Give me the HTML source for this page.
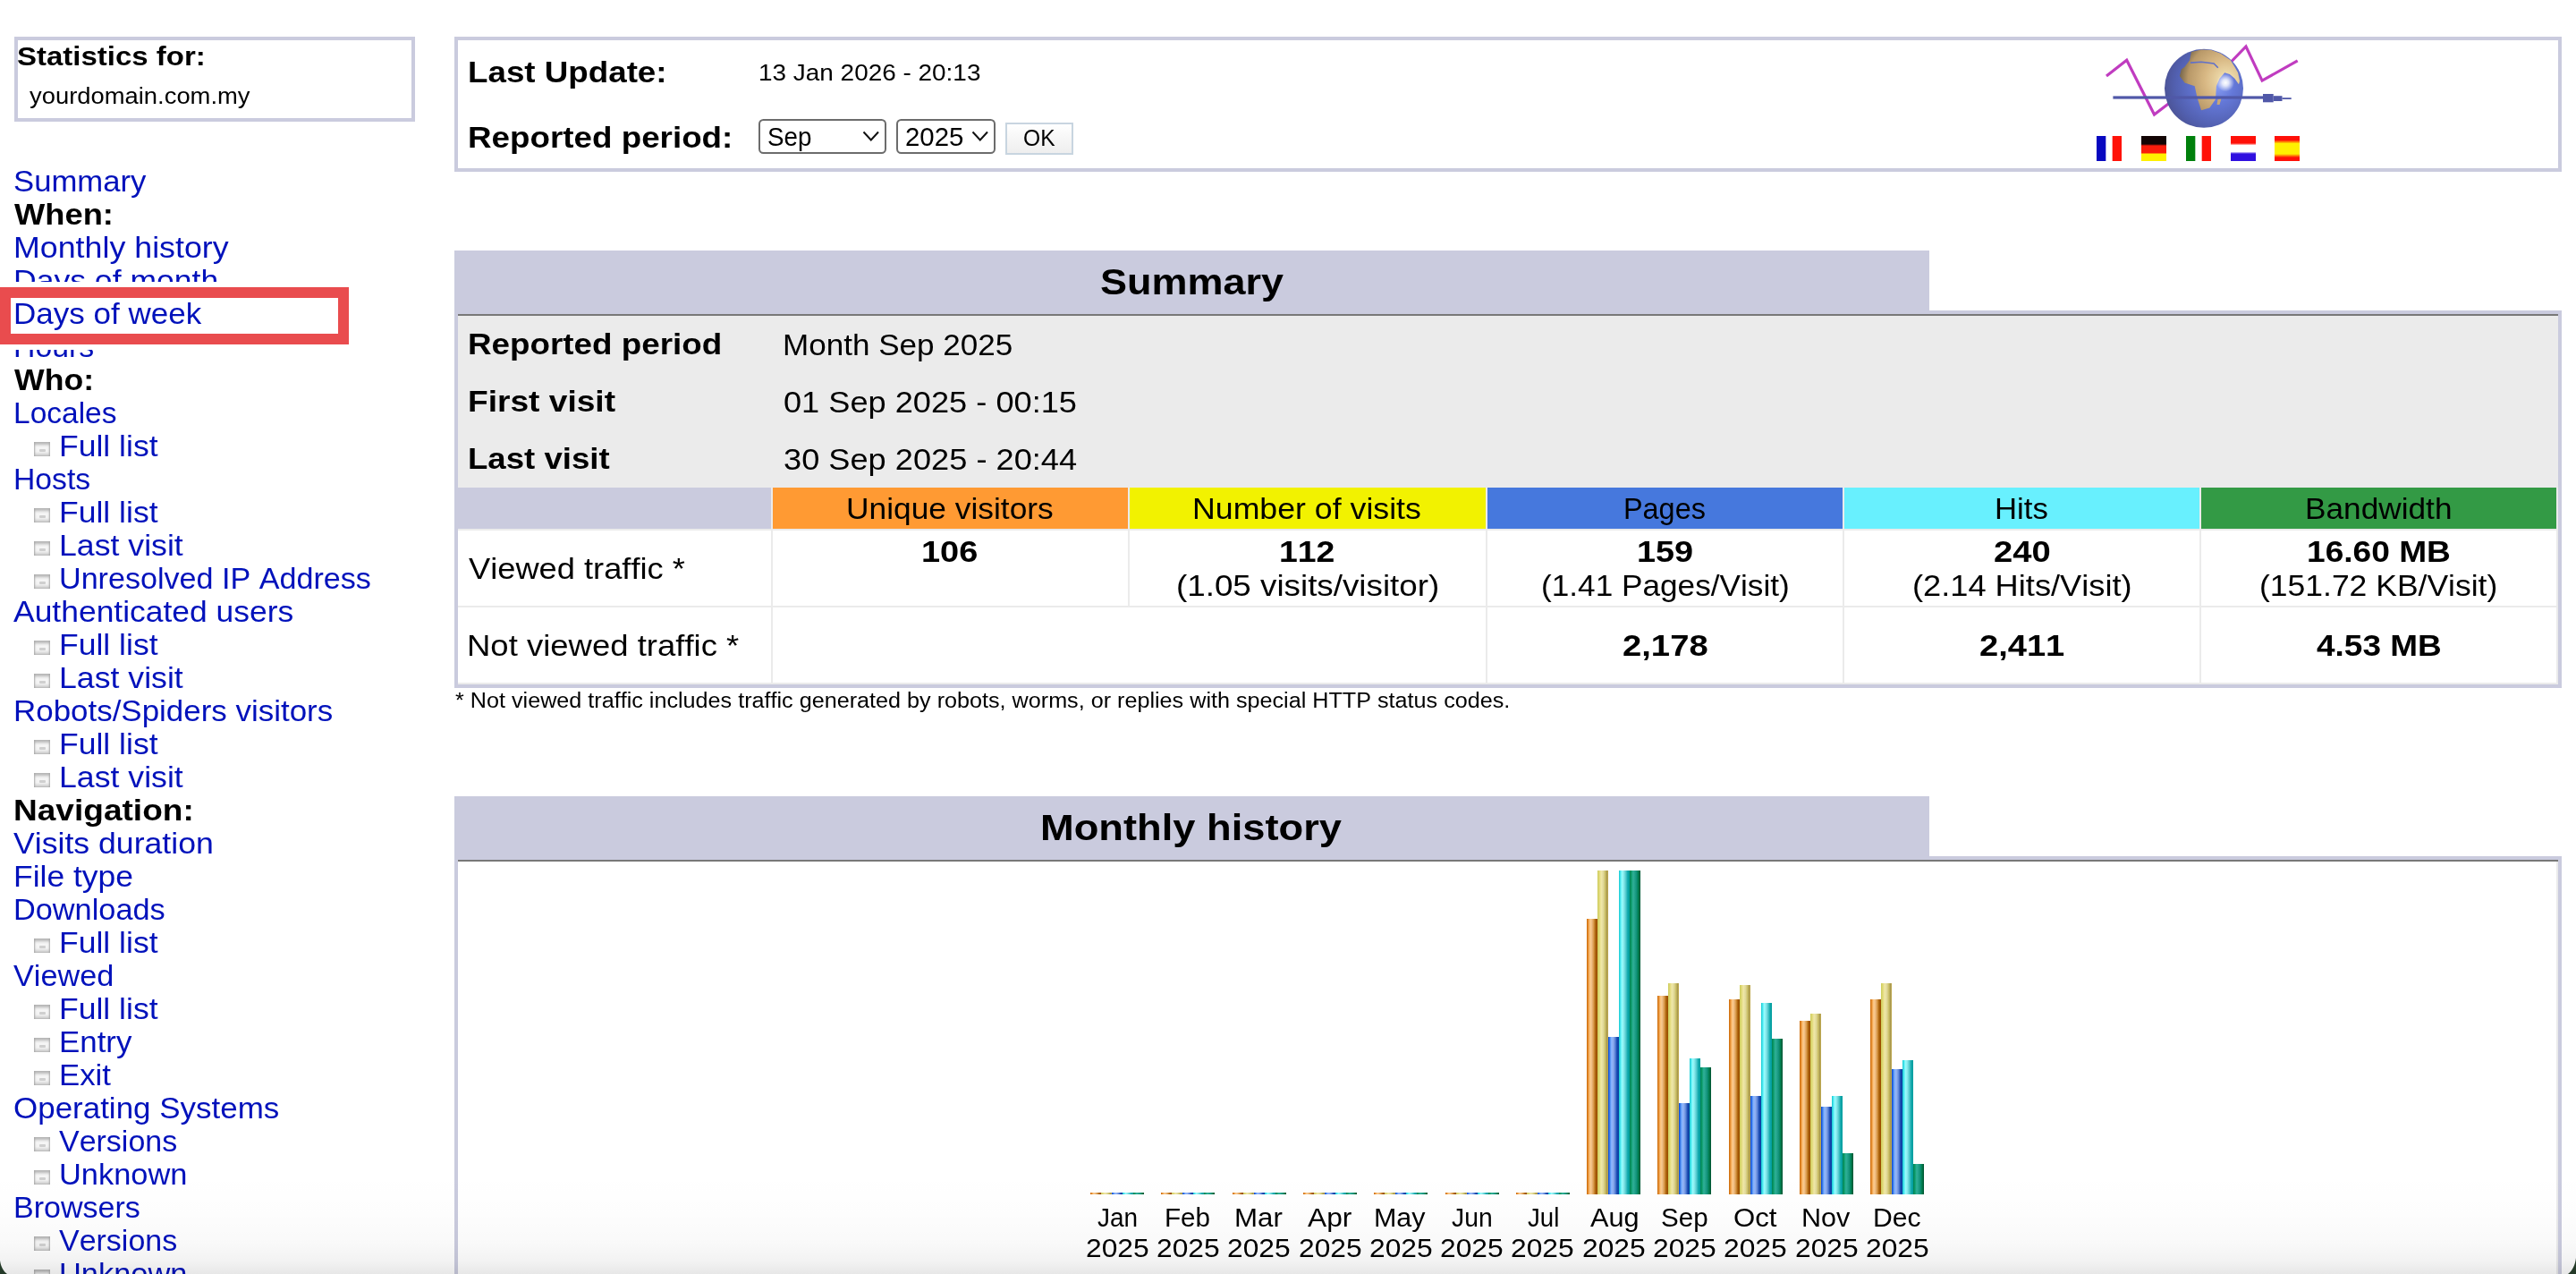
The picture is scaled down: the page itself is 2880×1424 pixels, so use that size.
<!DOCTYPE html><html><head><meta charset="utf-8"><style>
html,body{margin:0;padding:0;background:#fff;width:2880px;height:1424px;overflow:hidden;position:relative}
body>div,body>span,body>svg{position:absolute;box-sizing:content-box}
.t{white-space:pre;font-family:"Liberation Sans",sans-serif;font-kerning:none;transform-origin:0 0;display:block}
.ic{width:18px;height:16px;box-sizing:border-box;background:linear-gradient(#b4b4b4 0px,#c4c4c4 2px,#e6e6e6 4px,#f6f6f6 6px,#f2f2f2 11px,#d8d8d8 14px,#b8b8b8 16px);box-shadow:inset 2px 0 2px -1px #a8a8a8,inset -2px 0 2px -1px #a8a8a8;filter:blur(0.35px)}
.ic:after{content:'';position:absolute;left:6px;top:8px;width:7px;height:3px;background:#cfcfcf;border-radius:1px}
.sel{border:2.4px solid #6c6c6c;border-radius:5.5px;background:#fff}
@media (max-width:2000px){html{zoom:0.5}}
</style></head><body><div style="left:16px;top:41px;width:440px;height:87px;border:4px solid #CACBDE;"></div>
<span class="t" style="left:19.35px;top:49.16px;font-size:29.23px;line-height:29.23px;font-weight:bold;color:#000;transform:scaleX(1.1287);">Statistics for:</span>
<span class="t" style="left:32.93px;top:94.63px;font-size:25.13px;line-height:25.13px;font-weight:normal;color:#000;transform:scaleX(1.0899);">yourdomain.com.my</span>
<span class="t" style="left:15.47px;top:187.17px;font-size:32.76px;line-height:32.76px;font-weight:normal;color:#0011BB;transform:scaleX(1.0595);">Summary</span>
<span class="t" style="left:15.89px;top:224.16px;font-size:32.76px;line-height:32.76px;font-weight:bold;color:#000;transform:scaleX(1.1086);">When:</span>
<span class="t" style="left:15.11px;top:261.15px;font-size:32.76px;line-height:32.76px;font-weight:normal;color:#0011BB;transform:scaleX(1.0927);">Monthly history</span>
<span class="t" style="left:15.13px;top:298.14px;font-size:32.76px;line-height:32.76px;font-weight:normal;color:#0011BB;transform:scaleX(1.0854);">Days of month</span>
<span class="t" style="left:15.27px;top:372.12px;font-size:32.76px;line-height:32.76px;font-weight:normal;color:#0011BB;transform:scaleX(1.0330);">Hours</span>
<span class="t" style="left:15.89px;top:409.11px;font-size:32.76px;line-height:32.76px;font-weight:bold;color:#000;transform:scaleX(1.0882);">Who:</span>
<span class="t" style="left:15.29px;top:446.10px;font-size:32.76px;line-height:32.76px;font-weight:normal;color:#0011BB;transform:scaleX(1.0231);">Locales</span>
<div class="ic" style="left:38px;top:493.8px;"></div>
<span class="t" style="left:66.13px;top:483.09px;font-size:32.76px;line-height:32.76px;font-weight:normal;color:#0011BB;transform:scaleX(1.0846);">Full list</span>
<span class="t" style="left:15.28px;top:520.08px;font-size:32.76px;line-height:32.76px;font-weight:normal;color:#0011BB;transform:scaleX(1.0290);">Hosts</span>
<div class="ic" style="left:38px;top:567.8px;"></div>
<span class="t" style="left:66.13px;top:557.07px;font-size:32.76px;line-height:32.76px;font-weight:normal;color:#0011BB;transform:scaleX(1.0846);">Full list</span>
<div class="ic" style="left:38px;top:604.8px;"></div>
<span class="t" style="left:66.12px;top:594.06px;font-size:32.76px;line-height:32.76px;font-weight:normal;color:#0011BB;transform:scaleX(1.0890);">Last visit</span>
<div class="ic" style="left:38px;top:641.8px;"></div>
<span class="t" style="left:66.06px;top:631.05px;font-size:32.76px;line-height:32.76px;font-weight:normal;color:#0011BB;transform:scaleX(1.0417);">Unresolved IP Address</span>
<span class="t" style="left:15.17px;top:668.04px;font-size:32.76px;line-height:32.76px;font-weight:normal;color:#0011BB;transform:scaleX(1.0823);">Authenticated users</span>
<div class="ic" style="left:38px;top:715.8px;"></div>
<span class="t" style="left:66.13px;top:705.03px;font-size:32.76px;line-height:32.76px;font-weight:normal;color:#0011BB;transform:scaleX(1.0846);">Full list</span>
<div class="ic" style="left:38px;top:752.8px;"></div>
<span class="t" style="left:66.12px;top:742.02px;font-size:32.76px;line-height:32.76px;font-weight:normal;color:#0011BB;transform:scaleX(1.0890);">Last visit</span>
<span class="t" style="left:15.18px;top:779.01px;font-size:32.76px;line-height:32.76px;font-weight:normal;color:#0011BB;transform:scaleX(1.0664);">Robots/Spiders visitors</span>
<div class="ic" style="left:38px;top:826.7px;"></div>
<span class="t" style="left:66.13px;top:816.00px;font-size:32.76px;line-height:32.76px;font-weight:normal;color:#0011BB;transform:scaleX(1.0846);">Full list</span>
<div class="ic" style="left:38px;top:863.7px;"></div>
<span class="t" style="left:66.12px;top:852.99px;font-size:32.76px;line-height:32.76px;font-weight:normal;color:#0011BB;transform:scaleX(1.0890);">Last visit</span>
<span class="t" style="left:15.37px;top:889.98px;font-size:32.76px;line-height:32.76px;font-weight:bold;color:#000;transform:scaleX(1.1313);">Navigation:</span>
<span class="t" style="left:15.09px;top:926.97px;font-size:32.76px;line-height:32.76px;font-weight:normal;color:#0011BB;transform:scaleX(1.0880);">Visits duration</span>
<span class="t" style="left:15.13px;top:963.96px;font-size:32.76px;line-height:32.76px;font-weight:normal;color:#0011BB;transform:scaleX(1.0831);">File type</span>
<span class="t" style="left:15.23px;top:1000.95px;font-size:32.76px;line-height:32.76px;font-weight:normal;color:#0011BB;transform:scaleX(1.0474);">Downloads</span>
<div class="ic" style="left:38px;top:1048.7px;"></div>
<span class="t" style="left:66.13px;top:1037.94px;font-size:32.76px;line-height:32.76px;font-weight:normal;color:#0011BB;transform:scaleX(1.0846);">Full list</span>
<span class="t" style="left:15.09px;top:1074.93px;font-size:32.76px;line-height:32.76px;font-weight:normal;color:#0011BB;transform:scaleX(1.0452);">Viewed</span>
<div class="ic" style="left:38px;top:1122.7px;"></div>
<span class="t" style="left:66.13px;top:1111.92px;font-size:32.76px;line-height:32.76px;font-weight:normal;color:#0011BB;transform:scaleX(1.0846);">Full list</span>
<div class="ic" style="left:38px;top:1159.6px;"></div>
<span class="t" style="left:66.18px;top:1148.91px;font-size:32.76px;line-height:32.76px;font-weight:normal;color:#0011BB;transform:scaleX(1.0653);">Entry</span>
<div class="ic" style="left:38px;top:1196.6px;"></div>
<span class="t" style="left:66.19px;top:1185.90px;font-size:32.76px;line-height:32.76px;font-weight:normal;color:#0011BB;transform:scaleX(1.0626);">Exit</span>
<span class="t" style="left:15.08px;top:1222.89px;font-size:32.76px;line-height:32.76px;font-weight:normal;color:#0011BB;transform:scaleX(1.0674);">Operating Systems</span>
<div class="ic" style="left:38px;top:1270.6px;"></div>
<span class="t" style="left:66.09px;top:1259.88px;font-size:32.76px;line-height:32.76px;font-weight:normal;color:#0011BB;transform:scaleX(1.0371);">Versions</span>
<div class="ic" style="left:38px;top:1307.6px;"></div>
<span class="t" style="left:66.04px;top:1296.87px;font-size:32.76px;line-height:32.76px;font-weight:normal;color:#0011BB;transform:scaleX(1.0505);">Unknown</span>
<span class="t" style="left:15.25px;top:1333.86px;font-size:32.76px;line-height:32.76px;font-weight:normal;color:#0011BB;transform:scaleX(1.0396);">Browsers</span>
<div class="ic" style="left:38px;top:1381.6px;"></div>
<span class="t" style="left:66.09px;top:1370.85px;font-size:32.76px;line-height:32.76px;font-weight:normal;color:#0011BB;transform:scaleX(1.0371);">Versions</span>
<div class="ic" style="left:38px;top:1418.6px;"></div>
<span class="t" style="left:66.04px;top:1407.84px;font-size:32.76px;line-height:32.76px;font-weight:normal;color:#0011BB;transform:scaleX(1.0505);">Unknown</span>
<div style="left:0px;top:315px;width:396px;height:76px;background:#fff;"></div>
<div style="left:0px;top:321px;width:366px;height:40px;border:12px solid #E94C4E;background:#fff;"></div>
<span class="t" style="left:15.17px;top:335.13px;font-size:32.76px;line-height:32.76px;font-weight:normal;color:#0011BB;transform:scaleX(1.0691);">Days of week</span>
<div style="left:508px;top:41px;width:2348px;height:143px;border:4px solid #CACBDE;"></div>
<span class="t" style="left:523.14px;top:65.47px;font-size:32.76px;line-height:32.76px;font-weight:bold;color:#000;transform:scaleX(1.1220);">Last Update:</span>
<span class="t" style="left:848.17px;top:69.29px;font-size:25.89px;line-height:25.89px;font-weight:normal;color:#000;transform:scaleX(1.0792);">13 Jan 2026 - 20:13</span>
<span class="t" style="left:523.14px;top:138.07px;font-size:32.76px;line-height:32.76px;font-weight:bold;color:#000;transform:scaleX(1.1232);">Reported period:</span>
<div class="sel" style="left:848px;top:133px;width:139px;height:35px;"></div>
<span class="t" style="left:857.94px;top:139.11px;font-size:29.16px;line-height:29.16px;font-weight:normal;color:#000;transform:scaleX(0.9525);">Sep</span>
<svg style="left:964px;top:146px;width:20px;height:13px" viewBox="0 0 20 13"><path d="M1.5 1.5 L9.8 10.5 L18 1.5" fill="none" stroke="#111" stroke-width="2"/></svg>
<div class="sel" style="left:1002px;top:133px;width:107px;height:35px;"></div>
<span class="t" style="left:1011.82px;top:139.11px;font-size:29.16px;line-height:29.16px;font-weight:normal;color:#000;transform:scaleX(1.0082);">2025</span>
<svg style="left:1086px;top:146px;width:20px;height:13px" viewBox="0 0 20 13"><path d="M1.5 1.5 L9.8 10.5 L18 1.5" fill="none" stroke="#111" stroke-width="2"/></svg>
<div style="left:1124px;top:137px;width:72px;height:32px;border:2px solid #C8D5E0;background:linear-gradient(#fff,#eee);"></div>
<span class="t" style="left:1144.03px;top:141.53px;font-size:25.36px;line-height:25.36px;font-weight:normal;color:#000;transform:scaleX(0.9700);">OK</span>
<svg style="left:2340px;top:44px;width:240px;height:104px" viewBox="0 0 240 104">
<defs>
<radialGradient id="oc" cx="0.66" cy="0.46" r="0.75"><stop offset="0" stop-color="#8aa0f4"/><stop offset="0.3" stop-color="#6478d8"/><stop offset="0.7" stop-color="#5260b0"/><stop offset="1" stop-color="#484c88"/></radialGradient>
<radialGradient id="ld" cx="0.78" cy="0.5" r="0.8"><stop offset="0" stop-color="#f4e6b8"/><stop offset="0.45" stop-color="#d8b884"/><stop offset="0.8" stop-color="#b89868"/><stop offset="1" stop-color="#6e6048"/></radialGradient>
<radialGradient id="hl" cx="0.5" cy="0.5" r="0.5"><stop offset="0" stop-color="#fff" stop-opacity="1"/><stop offset="0.35" stop-color="#fff" stop-opacity="0.8"/><stop offset="1" stop-color="#fff" stop-opacity="0"/></radialGradient>
</defs>
<polyline points="15,41 37.7,23.3 68.5,84 100,60 140,40 171,8 189.1,46.1 228.7,23.8" fill="none" stroke="#C03CC0" stroke-width="3.2" stroke-linejoin="miter"/>
<circle cx="124" cy="54.8" r="44" fill="url(#oc)"/>
<path d="M109.9,14 L121.1,11.6 L132.3,12.1 L142.6,15.8 L153.7,23.3 L158.4,30.7 L162.1,37.3 L164,46.6 L163,50.3 L158.4,43.8 L152.8,39.1 L147.2,37.3 L141.6,43.8 L137.9,52.2 L137,67.1 L130.4,76.4 L121.1,79.2 L116.5,65.2 L113.7,52.2 L102.5,48.4 L96.9,41 L98.8,33.5 L102.5,30.7 L108.1,23.3 Z" fill="url(#ld)"/>
<polyline points="109,26.1 121.1,25.2 135.1,27 139.8,31.7" fill="none" stroke="#6070c8" stroke-width="1.6"/>
<path d="M139.5,67 L143.5,66 L141.5,73 L138.5,73 Z" fill="#c8a878"/>
<circle cx="148.1" cy="48.4" r="10" fill="url(#hl)"/>
<rect x="22.4" y="63.4" width="168" height="3.2" fill="#5058A8"/>
<rect x="190" y="61" width="11.7" height="9.3" fill="#5058A8"/>
<rect x="201.7" y="63.2" width="9.8" height="5.8" fill="#5058A8"/>
<rect x="211.5" y="65.2" width="10.2" height="1.8" fill="#5058A8"/>
</svg>
<div style="left:2344px;top:152px;width:28px;height:28px;background:linear-gradient(90deg,#0808c0 0 9.5px,#fff 11px 17px,#ff1208 18.5px)"></div>
<div style="left:2394px;top:152px;width:28px;height:28px;background:linear-gradient(#120404 0 9px,#fa1c0c 11px 18.5px,#fff000 20.5px)"></div>
<div style="left:2444px;top:152px;width:28px;height:28px;background:linear-gradient(90deg,#00800c 0 9.5px,#fff 11px 17px,#ff1208 18.5px)"></div>
<div style="left:2494px;top:152px;width:28px;height:28px;background:linear-gradient(#ff1008 0 8px,#fff 10.5px 17.5px,#3010e0 20px)"></div>
<div style="left:2543px;top:152px;width:28px;height:28px;background:linear-gradient(#ff1008 0 4.5px,#fff000 8.5px 20px,#ff1008 24px)"></div>
<div style="left:508px;top:280px;width:2356px;height:489px;background:#CACBDE;"></div>
<div style="left:2157px;top:280px;width:707px;height:67px;background:#fff;"></div>
<span class="t" style="left:1229.95px;top:295.20px;font-size:40.99px;line-height:40.99px;font-weight:bold;color:#000;transform:scaleX(1.0976);">Summary</span>
<div style="left:512px;top:351px;width:2348px;height:2px;background:#787878;"></div>
<div style="left:512px;top:353px;width:2348px;height:192px;background:#EBEBEB;"></div>
<span class="t" style="left:523.24px;top:369.27px;font-size:32.76px;line-height:32.76px;font-weight:bold;color:#000;transform:scaleX(1.1241);">Reported period</span>
<span class="t" style="left:874.72px;top:369.00px;font-size:33.07px;line-height:33.07px;font-weight:normal;color:#000;transform:scaleX(1.0602);">Month Sep 2025</span>
<span class="t" style="left:523.22px;top:432.97px;font-size:32.76px;line-height:32.76px;font-weight:bold;color:#000;transform:scaleX(1.1335);">First visit</span>
<span class="t" style="left:876.19px;top:432.70px;font-size:33.07px;line-height:33.07px;font-weight:normal;color:#000;transform:scaleX(1.0944);">01 Sep 2025 - 00:15</span>
<span class="t" style="left:523.25px;top:497.27px;font-size:32.76px;line-height:32.76px;font-weight:bold;color:#000;transform:scaleX(1.1170);">Last visit</span>
<span class="t" style="left:876.22px;top:497.00px;font-size:33.07px;line-height:33.07px;font-weight:normal;color:#000;transform:scaleX(1.0949);">30 Sep 2025 - 20:44</span>
<div style="left:512px;top:545px;width:2348px;height:220px;background:#EBEBEB;"></div>
<div style="left:512px;top:545px;width:350px;height:46px;background:#CACBDE;"></div>
<div style="left:512px;top:593px;width:350px;height:84px;background:#fff;"></div>
<div style="left:864px;top:545px;width:397px;height:46px;background:#FF9A33;"></div>
<div style="left:864px;top:593px;width:397px;height:84px;background:#fff;"></div>
<div style="left:1263px;top:545px;width:398px;height:46px;background:#F2F200;"></div>
<div style="left:1263px;top:593px;width:398px;height:84px;background:#fff;"></div>
<div style="left:1663px;top:545px;width:397px;height:46px;background:#4678DD;"></div>
<div style="left:1663px;top:593px;width:397px;height:84px;background:#fff;"></div>
<div style="left:2062px;top:545px;width:397px;height:46px;background:#68F0FE;"></div>
<div style="left:2062px;top:593px;width:397px;height:84px;background:#fff;"></div>
<div style="left:2461px;top:545px;width:397px;height:46px;background:#339A45;"></div>
<div style="left:2461px;top:593px;width:397px;height:84px;background:#fff;"></div>
<div style="left:512px;top:679px;width:350px;height:84px;background:#fff;"></div>
<div style="left:864px;top:679px;width:797px;height:84px;background:#fff;"></div>
<div style="left:1663px;top:679px;width:397px;height:84px;background:#fff;"></div>
<div style="left:2062px;top:679px;width:397px;height:84px;background:#fff;"></div>
<div style="left:2461px;top:679px;width:397px;height:84px;background:#fff;"></div>
<div style="left:1663px;top:679px;width:397px;height:84px;background:#fff;"></div>
<span class="t" style="left:945.88px;top:552.97px;font-size:32.76px;line-height:32.76px;font-weight:normal;color:#000;transform:scaleX(1.0790);">Unique visitors</span>
<span class="t" style="left:1333.22px;top:552.97px;font-size:32.76px;line-height:32.76px;font-weight:normal;color:#000;transform:scaleX(1.0899);">Number of visits</span>
<span class="t" style="left:1814.82px;top:552.97px;font-size:32.76px;line-height:32.76px;font-weight:normal;color:#000;transform:scaleX(0.9890);">Pages</span>
<span class="t" style="left:2229.82px;top:552.97px;font-size:32.76px;line-height:32.76px;font-weight:normal;color:#000;transform:scaleX(1.0596);">Hits</span>
<span class="t" style="left:2576.93px;top:552.97px;font-size:32.76px;line-height:32.76px;font-weight:normal;color:#000;transform:scaleX(1.0756);">Bandwidth</span>
<span class="t" style="left:524.44px;top:619.77px;font-size:32.76px;line-height:32.76px;font-weight:normal;color:#000;transform:scaleX(1.1075);">Viewed traffic *</span>
<span class="t" style="left:521.61px;top:705.77px;font-size:32.76px;line-height:32.76px;font-weight:normal;color:#000;transform:scaleX(1.1145);">Not viewed traffic *</span>
<span class="t" style="left:1030.34px;top:601.07px;font-size:32.76px;line-height:32.76px;font-weight:bold;color:#000;transform:scaleX(1.1584);">106</span>
<span class="t" style="left:1430.39px;top:601.07px;font-size:32.76px;line-height:32.76px;font-weight:bold;color:#000;transform:scaleX(1.1412);">112</span>
<span class="t" style="left:1314.84px;top:638.57px;font-size:32.76px;line-height:32.76px;font-weight:normal;color:#000;transform:scaleX(1.1229);">(1.05 visits/visitor)</span>
<span class="t" style="left:1829.51px;top:601.07px;font-size:32.76px;line-height:32.76px;font-weight:bold;color:#000;transform:scaleX(1.1529);">159</span>
<span class="t" style="left:1722.58px;top:638.57px;font-size:32.76px;line-height:32.76px;font-weight:normal;color:#000;transform:scaleX(1.0746);">(1.41 Pages/Visit)</span>
<span class="t" style="left:2228.79px;top:601.07px;font-size:32.76px;line-height:32.76px;font-weight:bold;color:#000;transform:scaleX(1.1648);">240</span>
<span class="t" style="left:2137.70px;top:638.57px;font-size:32.76px;line-height:32.76px;font-weight:normal;color:#000;transform:scaleX(1.1060);">(2.14 Hits/Visit)</span>
<span class="t" style="left:2578.69px;top:601.07px;font-size:32.76px;line-height:32.76px;font-weight:bold;color:#000;transform:scaleX(1.1334);">16.60 MB</span>
<span class="t" style="left:2526.34px;top:638.57px;font-size:32.76px;line-height:32.76px;font-weight:normal;color:#000;transform:scaleX(1.0835);">(151.72 KB/Visit)</span>
<span class="t" style="left:1813.60px;top:706.07px;font-size:32.76px;line-height:32.76px;font-weight:bold;color:#000;transform:scaleX(1.1670);">2,178</span>
<span class="t" style="left:2212.71px;top:706.07px;font-size:32.76px;line-height:32.76px;font-weight:bold;color:#000;transform:scaleX(1.1629);">2,411</span>
<span class="t" style="left:2590.21px;top:706.07px;font-size:32.76px;line-height:32.76px;font-weight:bold;color:#000;transform:scaleX(1.1285);">4.53 MB</span>
<span class="t" style="left:508.89px;top:772.20px;font-size:23.04px;line-height:23.04px;font-weight:normal;color:#000;transform:scaleX(1.0929);">* Not viewed traffic includes traffic generated by robots, worms, or replies with special HTTP status codes.</span>
<div style="left:508px;top:890px;width:2356px;height:534px;background:#CACBDE;"></div>
<div style="left:2157px;top:890px;width:707px;height:67px;background:#fff;"></div>
<span class="t" style="left:1163.37px;top:904.90px;font-size:40.99px;line-height:40.99px;font-weight:bold;color:#000;transform:scaleX(1.1047);">Monthly history</span>
<div style="left:512px;top:961px;width:2348px;height:2px;background:#787878;"></div>
<div style="left:512px;top:963px;width:2348px;height:461px;background:#EBEBEB;"></div>
<div style="left:512px;top:963px;width:2346px;height:461px;background:#fff;"></div>
<div style="left:1219px;top:1333px;width:12px;height:2px;background:linear-gradient(90deg,#c86400 0%,#f0a048 18%,#ffcc8c 32%,#f0c088 45%,#d89848 65%,#b06810 80%,#9a4e00 92%,#a05000 100%)"></div>
<div style="left:1231px;top:1333px;width:12px;height:2px;background:linear-gradient(90deg,#cccc58 0%,#e4dc80 20%,#f0e8a8 35%,#e0d898 55%,#c8bc60 75%,#a89850 88%,#c8b050 100%)"></div>
<div style="left:1243px;top:1333px;width:12px;height:2px;background:linear-gradient(90deg,#0040d8 0%,#5090f0 18%,#88b4ff 30%,#90b0f0 45%,#5c84d8 65%,#1848b0 82%,#0840a0 100%)"></div>
<div style="left:1255px;top:1333px;width:12px;height:2px;background:linear-gradient(90deg,#10c8d0 0%,#60f0f8 18%,#98fcfc 30%,#88e8ec 45%,#50c8cc 65%,#10a8ac 82%,#009c9c 100%)"></div>
<div style="left:1267px;top:1333px;width:12px;height:2px;background:linear-gradient(90deg,#008050 0%,#10a070 18%,#30b098 32%,#20a088 50%,#109078 65%,#008050 80%,#005030 100%)"></div>
<span class="t" style="left:1227.18px;top:1345.94px;font-size:29.96px;line-height:29.96px;font-weight:normal;color:#000;transform:scaleX(0.9319);">Jan</span>
<span class="t" style="left:1213.61px;top:1379.94px;font-size:29.96px;line-height:29.96px;font-weight:normal;color:#000;transform:scaleX(1.0582);">2025</span>
<div style="left:1298px;top:1333px;width:12px;height:2px;background:linear-gradient(90deg,#c86400 0%,#f0a048 18%,#ffcc8c 32%,#f0c088 45%,#d89848 65%,#b06810 80%,#9a4e00 92%,#a05000 100%)"></div>
<div style="left:1310px;top:1333px;width:12px;height:2px;background:linear-gradient(90deg,#cccc58 0%,#e4dc80 20%,#f0e8a8 35%,#e0d898 55%,#c8bc60 75%,#a89850 88%,#c8b050 100%)"></div>
<div style="left:1322px;top:1333px;width:12px;height:2px;background:linear-gradient(90deg,#0040d8 0%,#5090f0 18%,#88b4ff 30%,#90b0f0 45%,#5c84d8 65%,#1848b0 82%,#0840a0 100%)"></div>
<div style="left:1334px;top:1333px;width:12px;height:2px;background:linear-gradient(90deg,#10c8d0 0%,#60f0f8 18%,#98fcfc 30%,#88e8ec 45%,#50c8cc 65%,#10a8ac 82%,#009c9c 100%)"></div>
<div style="left:1346px;top:1333px;width:12px;height:2px;background:linear-gradient(90deg,#008050 0%,#10a070 18%,#30b098 32%,#20a088 50%,#109078 65%,#008050 80%,#005030 100%)"></div>
<span class="t" style="left:1302.16px;top:1345.94px;font-size:29.96px;line-height:29.96px;font-weight:normal;color:#000;transform:scaleX(0.9897);">Feb</span>
<span class="t" style="left:1292.91px;top:1379.94px;font-size:29.96px;line-height:29.96px;font-weight:normal;color:#000;transform:scaleX(1.0582);">2025</span>
<div style="left:1378px;top:1333px;width:12px;height:2px;background:linear-gradient(90deg,#c86400 0%,#f0a048 18%,#ffcc8c 32%,#f0c088 45%,#d89848 65%,#b06810 80%,#9a4e00 92%,#a05000 100%)"></div>
<div style="left:1390px;top:1333px;width:12px;height:2px;background:linear-gradient(90deg,#cccc58 0%,#e4dc80 20%,#f0e8a8 35%,#e0d898 55%,#c8bc60 75%,#a89850 88%,#c8b050 100%)"></div>
<div style="left:1402px;top:1333px;width:12px;height:2px;background:linear-gradient(90deg,#0040d8 0%,#5090f0 18%,#88b4ff 30%,#90b0f0 45%,#5c84d8 65%,#1848b0 82%,#0840a0 100%)"></div>
<div style="left:1414px;top:1333px;width:12px;height:2px;background:linear-gradient(90deg,#10c8d0 0%,#60f0f8 18%,#98fcfc 30%,#88e8ec 45%,#50c8cc 65%,#10a8ac 82%,#009c9c 100%)"></div>
<div style="left:1426px;top:1333px;width:12px;height:2px;background:linear-gradient(90deg,#008050 0%,#10a070 18%,#30b098 32%,#20a088 50%,#109078 65%,#008050 80%,#005030 100%)"></div>
<span class="t" style="left:1379.68px;top:1345.94px;font-size:29.96px;line-height:29.96px;font-weight:normal;color:#000;transform:scaleX(1.0426);">Mar</span>
<span class="t" style="left:1372.21px;top:1379.94px;font-size:29.96px;line-height:29.96px;font-weight:normal;color:#000;transform:scaleX(1.0582);">2025</span>
<div style="left:1457px;top:1333px;width:12px;height:2px;background:linear-gradient(90deg,#c86400 0%,#f0a048 18%,#ffcc8c 32%,#f0c088 45%,#d89848 65%,#b06810 80%,#9a4e00 92%,#a05000 100%)"></div>
<div style="left:1469px;top:1333px;width:12px;height:2px;background:linear-gradient(90deg,#cccc58 0%,#e4dc80 20%,#f0e8a8 35%,#e0d898 55%,#c8bc60 75%,#a89850 88%,#c8b050 100%)"></div>
<div style="left:1481px;top:1333px;width:12px;height:2px;background:linear-gradient(90deg,#0040d8 0%,#5090f0 18%,#88b4ff 30%,#90b0f0 45%,#5c84d8 65%,#1848b0 82%,#0840a0 100%)"></div>
<div style="left:1493px;top:1333px;width:12px;height:2px;background:linear-gradient(90deg,#10c8d0 0%,#60f0f8 18%,#98fcfc 30%,#88e8ec 45%,#50c8cc 65%,#10a8ac 82%,#009c9c 100%)"></div>
<div style="left:1505px;top:1333px;width:12px;height:2px;background:linear-gradient(90deg,#008050 0%,#10a070 18%,#30b098 32%,#20a088 50%,#109078 65%,#008050 80%,#005030 100%)"></div>
<span class="t" style="left:1462.43px;top:1345.94px;font-size:29.96px;line-height:29.96px;font-weight:normal;color:#000;transform:scaleX(1.0600);">Apr</span>
<span class="t" style="left:1451.51px;top:1379.94px;font-size:29.96px;line-height:29.96px;font-weight:normal;color:#000;transform:scaleX(1.0582);">2025</span>
<div style="left:1536px;top:1333px;width:12px;height:2px;background:linear-gradient(90deg,#c86400 0%,#f0a048 18%,#ffcc8c 32%,#f0c088 45%,#d89848 65%,#b06810 80%,#9a4e00 92%,#a05000 100%)"></div>
<div style="left:1548px;top:1333px;width:12px;height:2px;background:linear-gradient(90deg,#cccc58 0%,#e4dc80 20%,#f0e8a8 35%,#e0d898 55%,#c8bc60 75%,#a89850 88%,#c8b050 100%)"></div>
<div style="left:1560px;top:1333px;width:12px;height:2px;background:linear-gradient(90deg,#0040d8 0%,#5090f0 18%,#88b4ff 30%,#90b0f0 45%,#5c84d8 65%,#1848b0 82%,#0840a0 100%)"></div>
<div style="left:1572px;top:1333px;width:12px;height:2px;background:linear-gradient(90deg,#10c8d0 0%,#60f0f8 18%,#98fcfc 30%,#88e8ec 45%,#50c8cc 65%,#10a8ac 82%,#009c9c 100%)"></div>
<div style="left:1584px;top:1333px;width:12px;height:2px;background:linear-gradient(90deg,#008050 0%,#10a070 18%,#30b098 32%,#20a088 50%,#109078 65%,#008050 80%,#005030 100%)"></div>
<span class="t" style="left:1536.21px;top:1345.94px;font-size:29.96px;line-height:29.96px;font-weight:normal;color:#000;transform:scaleX(1.0167);">May</span>
<span class="t" style="left:1530.81px;top:1379.94px;font-size:29.96px;line-height:29.96px;font-weight:normal;color:#000;transform:scaleX(1.0582);">2025</span>
<div style="left:1616px;top:1333px;width:12px;height:2px;background:linear-gradient(90deg,#c86400 0%,#f0a048 18%,#ffcc8c 32%,#f0c088 45%,#d89848 65%,#b06810 80%,#9a4e00 92%,#a05000 100%)"></div>
<div style="left:1628px;top:1333px;width:12px;height:2px;background:linear-gradient(90deg,#cccc58 0%,#e4dc80 20%,#f0e8a8 35%,#e0d898 55%,#c8bc60 75%,#a89850 88%,#c8b050 100%)"></div>
<div style="left:1640px;top:1333px;width:12px;height:2px;background:linear-gradient(90deg,#0040d8 0%,#5090f0 18%,#88b4ff 30%,#90b0f0 45%,#5c84d8 65%,#1848b0 82%,#0840a0 100%)"></div>
<div style="left:1652px;top:1333px;width:12px;height:2px;background:linear-gradient(90deg,#10c8d0 0%,#60f0f8 18%,#98fcfc 30%,#88e8ec 45%,#50c8cc 65%,#10a8ac 82%,#009c9c 100%)"></div>
<div style="left:1664px;top:1333px;width:12px;height:2px;background:linear-gradient(90deg,#008050 0%,#10a070 18%,#30b098 32%,#20a088 50%,#109078 65%,#008050 80%,#005030 100%)"></div>
<span class="t" style="left:1623.38px;top:1345.94px;font-size:29.96px;line-height:29.96px;font-weight:normal;color:#000;transform:scaleX(0.9448);">Jun</span>
<span class="t" style="left:1610.11px;top:1379.94px;font-size:29.96px;line-height:29.96px;font-weight:normal;color:#000;transform:scaleX(1.0582);">2025</span>
<div style="left:1695px;top:1333px;width:12px;height:2px;background:linear-gradient(90deg,#c86400 0%,#f0a048 18%,#ffcc8c 32%,#f0c088 45%,#d89848 65%,#b06810 80%,#9a4e00 92%,#a05000 100%)"></div>
<div style="left:1707px;top:1333px;width:12px;height:2px;background:linear-gradient(90deg,#cccc58 0%,#e4dc80 20%,#f0e8a8 35%,#e0d898 55%,#c8bc60 75%,#a89850 88%,#c8b050 100%)"></div>
<div style="left:1719px;top:1333px;width:12px;height:2px;background:linear-gradient(90deg,#0040d8 0%,#5090f0 18%,#88b4ff 30%,#90b0f0 45%,#5c84d8 65%,#1848b0 82%,#0840a0 100%)"></div>
<div style="left:1731px;top:1333px;width:12px;height:2px;background:linear-gradient(90deg,#10c8d0 0%,#60f0f8 18%,#98fcfc 30%,#88e8ec 45%,#50c8cc 65%,#10a8ac 82%,#009c9c 100%)"></div>
<div style="left:1743px;top:1333px;width:12px;height:2px;background:linear-gradient(90deg,#008050 0%,#10a070 18%,#30b098 32%,#20a088 50%,#109078 65%,#008050 80%,#005030 100%)"></div>
<span class="t" style="left:1707.86px;top:1345.94px;font-size:29.96px;line-height:29.96px;font-weight:normal;color:#000;transform:scaleX(0.9216);">Jul</span>
<span class="t" style="left:1689.41px;top:1379.94px;font-size:29.96px;line-height:29.96px;font-weight:normal;color:#000;transform:scaleX(1.0582);">2025</span>
<div style="left:1774px;top:1027px;width:12px;height:308px;background:linear-gradient(90deg,#c86400 0%,#f0a048 18%,#ffcc8c 32%,#f0c088 45%,#d89848 65%,#b06810 80%,#9a4e00 92%,#a05000 100%)"></div>
<div style="left:1786px;top:973px;width:12px;height:362px;background:linear-gradient(90deg,#cccc58 0%,#e4dc80 20%,#f0e8a8 35%,#e0d898 55%,#c8bc60 75%,#a89850 88%,#c8b050 100%)"></div>
<div style="left:1798px;top:1159px;width:12px;height:176px;background:linear-gradient(90deg,#0040d8 0%,#5090f0 18%,#88b4ff 30%,#90b0f0 45%,#5c84d8 65%,#1848b0 82%,#0840a0 100%)"></div>
<div style="left:1810px;top:973px;width:12px;height:362px;background:linear-gradient(90deg,#10c8d0 0%,#60f0f8 18%,#98fcfc 30%,#88e8ec 45%,#50c8cc 65%,#10a8ac 82%,#009c9c 100%)"></div>
<div style="left:1822px;top:973px;width:12px;height:362px;background:linear-gradient(90deg,#008050 0%,#10a070 18%,#30b098 32%,#20a088 50%,#109078 65%,#008050 80%,#005030 100%)"></div>
<span class="t" style="left:1777.76px;top:1345.94px;font-size:29.96px;line-height:29.96px;font-weight:normal;color:#000;transform:scaleX(1.0243);">Aug</span>
<span class="t" style="left:1768.71px;top:1379.94px;font-size:29.96px;line-height:29.96px;font-weight:normal;color:#000;transform:scaleX(1.0582);">2025</span>
<div style="left:1853px;top:1113px;width:12px;height:222px;background:linear-gradient(90deg,#c86400 0%,#f0a048 18%,#ffcc8c 32%,#f0c088 45%,#d89848 65%,#b06810 80%,#9a4e00 92%,#a05000 100%)"></div>
<div style="left:1865px;top:1099px;width:12px;height:236px;background:linear-gradient(90deg,#cccc58 0%,#e4dc80 20%,#f0e8a8 35%,#e0d898 55%,#c8bc60 75%,#a89850 88%,#c8b050 100%)"></div>
<div style="left:1877px;top:1233px;width:12px;height:102px;background:linear-gradient(90deg,#0040d8 0%,#5090f0 18%,#88b4ff 30%,#90b0f0 45%,#5c84d8 65%,#1848b0 82%,#0840a0 100%)"></div>
<div style="left:1889px;top:1183px;width:12px;height:152px;background:linear-gradient(90deg,#10c8d0 0%,#60f0f8 18%,#98fcfc 30%,#88e8ec 45%,#50c8cc 65%,#10a8ac 82%,#009c9c 100%)"></div>
<div style="left:1901px;top:1193px;width:12px;height:142px;background:linear-gradient(90deg,#008050 0%,#10a070 18%,#30b098 32%,#20a088 50%,#109078 65%,#008050 80%,#005030 100%)"></div>
<span class="t" style="left:1857.05px;top:1345.94px;font-size:29.96px;line-height:29.96px;font-weight:normal;color:#000;transform:scaleX(0.9868);">Sep</span>
<span class="t" style="left:1848.01px;top:1379.94px;font-size:29.96px;line-height:29.96px;font-weight:normal;color:#000;transform:scaleX(1.0582);">2025</span>
<div style="left:1933px;top:1117px;width:12px;height:218px;background:linear-gradient(90deg,#c86400 0%,#f0a048 18%,#ffcc8c 32%,#f0c088 45%,#d89848 65%,#b06810 80%,#9a4e00 92%,#a05000 100%)"></div>
<div style="left:1945px;top:1101px;width:12px;height:234px;background:linear-gradient(90deg,#cccc58 0%,#e4dc80 20%,#f0e8a8 35%,#e0d898 55%,#c8bc60 75%,#a89850 88%,#c8b050 100%)"></div>
<div style="left:1957px;top:1225px;width:12px;height:110px;background:linear-gradient(90deg,#0040d8 0%,#5090f0 18%,#88b4ff 30%,#90b0f0 45%,#5c84d8 65%,#1848b0 82%,#0840a0 100%)"></div>
<div style="left:1969px;top:1121px;width:12px;height:214px;background:linear-gradient(90deg,#10c8d0 0%,#60f0f8 18%,#98fcfc 30%,#88e8ec 45%,#50c8cc 65%,#10a8ac 82%,#009c9c 100%)"></div>
<div style="left:1981px;top:1161px;width:12px;height:174px;background:linear-gradient(90deg,#008050 0%,#10a070 18%,#30b098 32%,#20a088 50%,#109078 65%,#008050 80%,#005030 100%)"></div>
<span class="t" style="left:1937.85px;top:1345.94px;font-size:29.96px;line-height:29.96px;font-weight:normal;color:#000;transform:scaleX(1.0396);">Oct</span>
<span class="t" style="left:1927.31px;top:1379.94px;font-size:29.96px;line-height:29.96px;font-weight:normal;color:#000;transform:scaleX(1.0582);">2025</span>
<div style="left:2012px;top:1141px;width:12px;height:194px;background:linear-gradient(90deg,#c86400 0%,#f0a048 18%,#ffcc8c 32%,#f0c088 45%,#d89848 65%,#b06810 80%,#9a4e00 92%,#a05000 100%)"></div>
<div style="left:2024px;top:1133px;width:12px;height:202px;background:linear-gradient(90deg,#cccc58 0%,#e4dc80 20%,#f0e8a8 35%,#e0d898 55%,#c8bc60 75%,#a89850 88%,#c8b050 100%)"></div>
<div style="left:2036px;top:1237px;width:12px;height:98px;background:linear-gradient(90deg,#0040d8 0%,#5090f0 18%,#88b4ff 30%,#90b0f0 45%,#5c84d8 65%,#1848b0 82%,#0840a0 100%)"></div>
<div style="left:2048px;top:1225px;width:12px;height:110px;background:linear-gradient(90deg,#10c8d0 0%,#60f0f8 18%,#98fcfc 30%,#88e8ec 45%,#50c8cc 65%,#10a8ac 82%,#009c9c 100%)"></div>
<div style="left:2060px;top:1289px;width:12px;height:46px;background:linear-gradient(90deg,#008050 0%,#10a070 18%,#30b098 32%,#20a088 50%,#109078 65%,#008050 80%,#005030 100%)"></div>
<span class="t" style="left:2013.64px;top:1345.94px;font-size:29.96px;line-height:29.96px;font-weight:normal;color:#000;transform:scaleX(1.0195);">Nov</span>
<span class="t" style="left:2006.61px;top:1379.94px;font-size:29.96px;line-height:29.96px;font-weight:normal;color:#000;transform:scaleX(1.0582);">2025</span>
<div style="left:2091px;top:1117px;width:12px;height:218px;background:linear-gradient(90deg,#c86400 0%,#f0a048 18%,#ffcc8c 32%,#f0c088 45%,#d89848 65%,#b06810 80%,#9a4e00 92%,#a05000 100%)"></div>
<div style="left:2103px;top:1099px;width:12px;height:236px;background:linear-gradient(90deg,#cccc58 0%,#e4dc80 20%,#f0e8a8 35%,#e0d898 55%,#c8bc60 75%,#a89850 88%,#c8b050 100%)"></div>
<div style="left:2115px;top:1195px;width:12px;height:140px;background:linear-gradient(90deg,#0040d8 0%,#5090f0 18%,#88b4ff 30%,#90b0f0 45%,#5c84d8 65%,#1848b0 82%,#0840a0 100%)"></div>
<div style="left:2127px;top:1185px;width:12px;height:150px;background:linear-gradient(90deg,#10c8d0 0%,#60f0f8 18%,#98fcfc 30%,#88e8ec 45%,#50c8cc 65%,#10a8ac 82%,#009c9c 100%)"></div>
<div style="left:2139px;top:1301px;width:12px;height:34px;background:linear-gradient(90deg,#008050 0%,#10a070 18%,#30b098 32%,#20a088 50%,#109078 65%,#008050 80%,#005030 100%)"></div>
<span class="t" style="left:2093.67px;top:1345.94px;font-size:29.96px;line-height:29.96px;font-weight:normal;color:#000;transform:scaleX(1.0058);">Dec</span>
<span class="t" style="left:2085.91px;top:1379.94px;font-size:29.96px;line-height:29.96px;font-weight:normal;color:#000;transform:scaleX(1.0582);">2025</span>
<div style="left:0;top:1310px;width:2880px;height:114px;background:linear-gradient(rgba(0,0,0,0) 0%,rgba(0,0,0,0.008) 40%,rgba(0,0,0,0.022) 70%,rgba(0,0,0,0.05) 88%,rgba(0,0,0,0.095) 100%)"></div>
<svg style="left:0;top:1400px;width:24px;height:24px" viewBox="0 0 24 24"><path d="M0,9 C1,16 4,21 8,24 L0,24 Z" fill="#243a28"/></svg>
<svg style="left:2856px;top:1400px;width:24px;height:24px" viewBox="0 0 24 24"><path d="M24,6 C23,14 20,20 15,24 L24,24 Z" fill="#243a28"/></svg></body></html>
